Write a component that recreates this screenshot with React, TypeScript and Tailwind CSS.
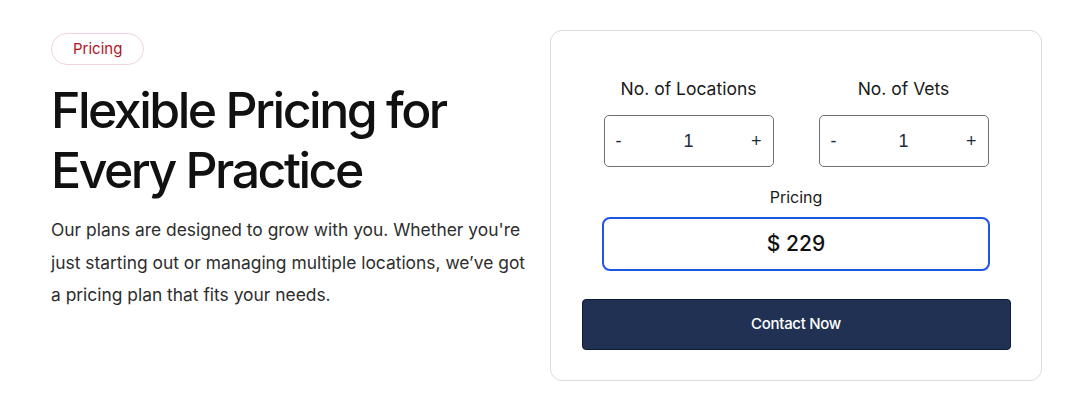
import { useState } from 'react'

const sans = { fontFamily: 'Inter, "Noto Sans", sans-serif' }

function Stepper({ label, value, onChange }: { label: string; value: number; onChange: (v: number) => void }) {
  return (
    <div className="flex w-[170px] flex-col items-center">
      <span className="text-[17.5px] leading-[24px] text-[#1a1a1a]" style={sans}>
        {label}
      </span>
      <div className="mt-[14px] flex h-[52px] w-full items-center justify-between rounded-[5px] border border-[#707070] px-[11px] font-['Liberation_Sans',Arial,sans-serif] text-[18px] text-[#1e293b]">
        <button className="w-[12px] text-left" onClick={() => onChange(Math.max(1, value - 1))}>
          -
        </button>
        <span>{value}</span>
        <button className="w-[12px] text-right" onClick={() => onChange(value + 1)}>
          +
        </button>
      </div>
    </div>
  )
}

export default function App() {
  const [locations, setLocations] = useState(1)
  const [vets, setVets] = useState(1)
  const price = 229 * locations + 0 * (vets - 1)

  return (
    <div className="flex h-[406px] w-[1070px] items-start bg-white pl-[51px] pt-[30px]" style={sans}>
      <div className="flex w-[485px] flex-col items-start pt-[3px]">
        <span className="flex h-[32px] items-center rounded-full border border-[#f2d4d9] px-[21px] text-[15px] text-[#b3121f]">
          Pricing
        </span>
        <h1 className="mt-[15px] text-[50px] leading-[60px] font-medium tracking-[-0.05em] text-[#111111]">
          Flexible Pricing for
          <br />
          Every Practice
        </h1>
        <p className="mt-[14px] text-[17.4px] leading-[32.5px] text-[#2e2e2e]">
          Our plans are designed to grow with you. Whether you're just starting out or managing multiple locations, we’ve
          got a pricing plan that fits your needs.
        </p>
      </div>

      <div className="ml-[14px] flex h-[351px] w-[492px] flex-col items-center rounded-[12px] border border-[#dcdcdc] pt-[46px]">
        <div className="flex gap-[45px]">
          <Stepper label="No. of Locations" value={locations} onChange={setLocations} />
          <Stepper label="No. of Vets" value={vets} onChange={setVets} />
        </div>
        <span className="mt-[18px] text-[16px] leading-[24px] text-[#1a1a1a]">Pricing</span>
        <div className="mt-[8px] flex h-[54px] w-[388px] items-center justify-center rounded-[8px] border-2 border-[#1f56e0] text-[21px] font-medium text-[#111111]">
          $ {price}
        </div>
        <button className="mt-[28px] h-[51px] w-[429px] rounded-[4px] border border-[#0f1a33] bg-[#213154] text-[15px] font-medium tracking-[-0.02em] text-white">
          Contact Now
        </button>
      </div>
    </div>
  )
}
